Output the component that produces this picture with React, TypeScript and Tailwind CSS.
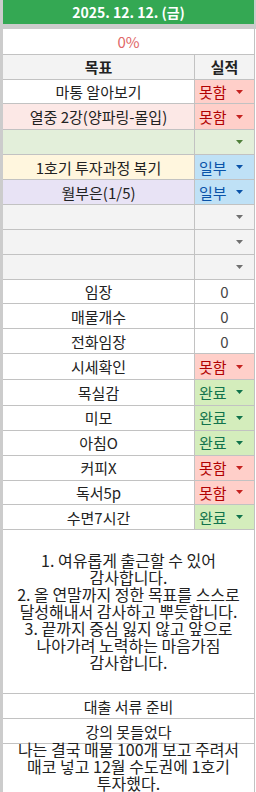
import React from "react";

// ── Cell data ────────────────────────────────────────────────────────────────

type Kind = "bad" | "part" | "done" | "num" | "green" | "gray";
type Row = { label: string; kind: Kind; bg: string; h: string };

const ROWS: Row[] = [
  { label: "마통 알아보기",         kind: "bad",   bg: "bg-white",      h: "h-[25px]" },
  { label: "열중 2강(양파링-몰입)", kind: "bad",   bg: "bg-[#fce8e6]",  h: "h-[26px]" },
  { label: "",                      kind: "green", bg: "bg-[#e3efda]",  h: "h-[25px]" },
  { label: "1호기 투자과정 복기",   kind: "part",  bg: "bg-[#fff6de]",  h: "h-[25px]" },
  { label: "월부은(1/5)",           kind: "part",  bg: "bg-[#e8e3f5]",  h: "h-[25px]" },
  { label: "",                      kind: "gray",  bg: "bg-[#f3f3f3]",  h: "h-[25px]" },
  { label: "",                      kind: "gray",  bg: "bg-[#f3f3f3]",  h: "h-[25px]" },
  { label: "",                      kind: "gray",  bg: "bg-[#f3f3f3]",  h: "h-[25px]" },
  { label: "임장",                  kind: "num",   bg: "bg-white",      h: "h-[25px]" },
  { label: "매물개수",              kind: "num",   bg: "bg-white",      h: "h-[25px]" },
  { label: "전화임장",              kind: "num",   bg: "bg-white",      h: "h-[25px]" },
  { label: "시세확인",              kind: "bad",   bg: "bg-white",      h: "h-[26px]" },
  { label: "목실감",                kind: "done",  bg: "bg-white",      h: "h-[26px]" },
  { label: "미모",                  kind: "done",  bg: "bg-white",      h: "h-[25px]" },
  { label: "아침O",                 kind: "done",  bg: "bg-white",      h: "h-[25px]" },
  { label: "커피X",                 kind: "bad",   bg: "bg-white",      h: "h-[25px]" },
  { label: "독서5p",                kind: "bad",   bg: "bg-white",      h: "h-[25px]" },
  { label: "수면7시간",             kind: "done",  bg: "bg-white",      h: "h-[25px]" },
];

const GRATITUDE = [
  "1. 여유롭게 출근할 수 있어",
  "감사합니다.",
  "2. 올 연말까지 정한 목표를 스스로",
  "달성해내서 감사하고 뿌듯합니다.",
  "3. 끝까지 중심 잃지 않고 앞으로",
  "나아가려 노력하는 마음가짐",
  "감사합니다.",
];

const LAST = [
  "나는 결국 매물 100개 보고 주려서",
  "매코 넣고 12월 수도권에 1호기",
  "투자했다.",
];

function Arrow({ color }: { color: string }) {
  return (
    <svg width="7" height="4" viewBox="0 0 7 4" className="shrink-0">
      <path d="M0 0h7L3.5 4z" fill={color} />
    </svg>
  );
}

function StatusCell({ kind }: { kind: Kind }) {
  if (kind === "num") {
    return (
      <div className="w-[60px] h-full flex items-center justify-center border-r border-[#c2c2c2] text-[#444] bg-white">
        0
      </div>
    );
  }
  if (kind === "green" || kind === "gray") {
    return (
      <div
        className={
          kind === "green"
            ? "w-[60px] h-full flex items-center justify-end pr-[11px] border-r border-[#c2c2c2] bg-[#e3efda]"
            : "w-[60px] h-full flex items-center justify-end pr-[11px] border-r border-[#c2c2c2] bg-[#f3f3f3]"
        }
      >
        <Arrow color={kind === "green" ? "#4f7f3a" : "#707070"} />
      </div>
    );
  }
  const chip =
    kind === "bad"
      ? { cls: "bg-[#ffcfc9] text-[#b10202]", label: "못함", arrow: "#c5221f" }
      : kind === "part"
      ? { cls: "bg-[#bfe1f6] text-[#0a53a8]", label: "일부", arrow: "#0a53a8" }
      : { cls: "bg-[#d4edbc] text-[#11734b]", label: "완료", arrow: "#11734b" };
  return (
    <div className={"w-[60px] h-full flex items-center justify-between pl-[4px] pr-[11px] border-r border-[#c2c2c2] " + chip.cls}>
      <span>{chip.label}</span>
      <Arrow color={chip.arrow} />
    </div>
  );
}

export default function App() {
  return (
    <div
      className="w-[256px] h-[792px] overflow-hidden flex bg-white text-[15px] leading-none text-[#222]"
      style={{ fontFamily: '"Noto Sans CJK KR", "Noto Sans", sans-serif' }}
    >
      {/* row-header strip */}
      <div className="w-[3px] shrink-0 bg-[#cccccc]" />

      <div className="flex-1 flex flex-col">
        {/* Date banner */}
        <div className="h-[24px] flex bg-[#cccccc] pr-[2px]">
          <div className="flex-1 bg-[#34a853] flex items-center justify-center text-white text-[14px] font-bold">
            2025. 12. 12. (금)
          </div>
        </div>
        <div className="h-[5px] bg-[#cccccc]" />

        {/* Progress */}
        <div className="h-[26px] w-[252px] flex items-center justify-center border-r border-b border-[#c2c2c2] text-[#e06666]">
          0%
        </div>

        {/* Column headers */}
        <div className="h-[25px] flex border-b border-[#c2c2c2] w-[252px] bg-[#f3f3f3] font-bold">
          <div className="w-[192px] h-full flex items-center justify-center border-r border-[#c2c2c2]">목표</div>
          <div className="w-[60px] h-full flex items-center justify-center border-r border-[#c2c2c2]">실적</div>
        </div>

        {/* Goals */}
        {ROWS.map((r, i) => (
          <div key={i} className={"flex w-[252px] border-b border-[#c2c2c2] " + r.h}>
            <div className={"w-[192px] h-full flex items-center justify-center border-r border-[#c2c2c2] whitespace-nowrap " + r.bg}>
              {r.label}
            </div>
            <StatusCell kind={r.kind} />
          </div>
        ))}

        {/* Gratitude */}
        <div className="h-[165px] w-[252px] flex flex-col items-center justify-center border-r border-b border-[#c2c2c2] text-[16px] leading-[17px] whitespace-nowrap">
          {GRATITUDE.map((t, i) => (
            <div key={i}>{t}</div>
          ))}
        </div>

        <div className="h-[25px] w-[252px] flex items-center justify-center border-r border-b border-[#c2c2c2]">
          대출 서류 준비
        </div>
        <div className="h-[25px] w-[252px] flex items-center justify-center border-r border-b border-[#c2c2c2]">
          강의 못들었다
        </div>

        {/* Overflowing note */}
        <div className="flex-1 w-[252px] border-r border-[#c2c2c2] flex flex-col items-center text-[16px] leading-[17px] whitespace-nowrap -mt-[3px]">
          {LAST.map((t, i) => (
            <div key={i}>{t}</div>
          ))}
        </div>
      </div>
    </div>
  );
}
